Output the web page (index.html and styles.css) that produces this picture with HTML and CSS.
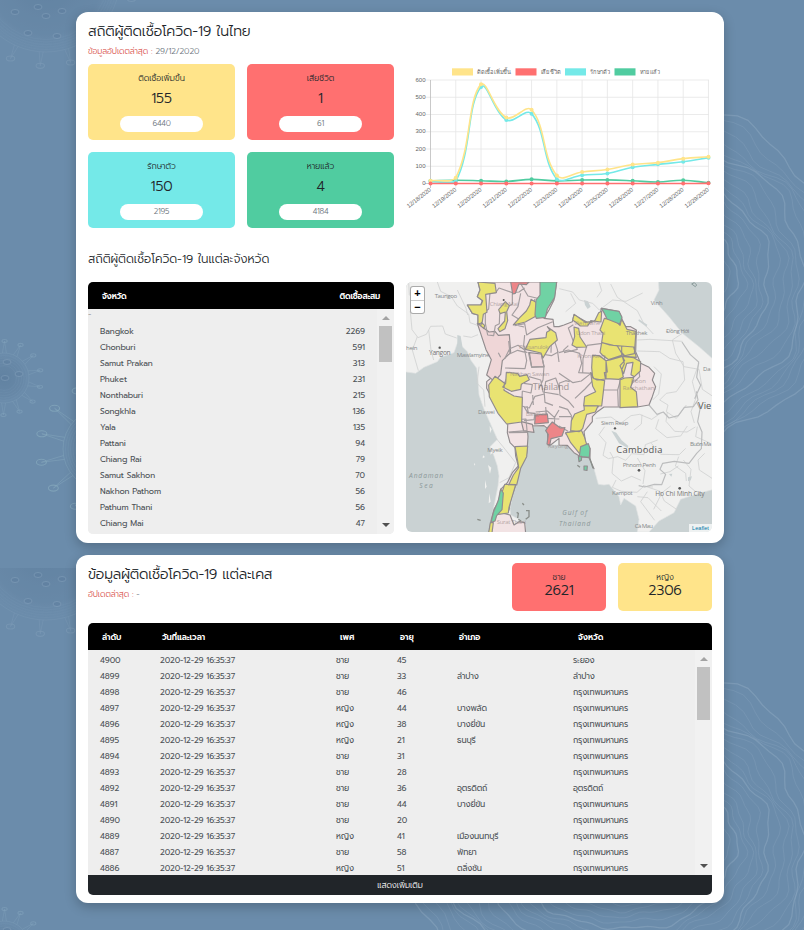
FILE: index.html
```html
<!DOCTYPE html>
<html lang="th">
<head>
<meta charset="utf-8">
<title>COVID-19</title>
<link rel="stylesheet" href="styles.css">
</head>
<body>
<svg class="backdrop" width="804" height="930" viewBox="0 0 804 930" aria-hidden="true">
  <defs>
    <radialGradient id="shade"><stop offset="0" stop-color="#3d5f80" stop-opacity=".38"/><stop offset=".75" stop-color="#526f8e" stop-opacity=".2"/><stop offset="1" stop-color="#6b8cab" stop-opacity="0"/></radialGradient>
    <clipPath id="tile-clip"><rect width="804" height="568"/></clipPath>
    <g id="tile" clip-path="url(#tile-clip)"></g>
  </defs>
  <use href="#tile"/>
  <use href="#tile" y="568"/>
</svg>
<main class="page">
  <section class="card card-summary">
    <div class="top">
      <div class="summary">
        <h1 class="title t1">สถิติผู้ติดเชื้อโควิด-19 ในไทย</h1>
        <p class="updated u1"><span class="red">ข้อมูลอัปเดตล่าสุด :</span> 29/12/2020</p>
        <div class="tiles">
          <div class="tile yellow"><span class="name">ติดเชื้อเพิ่มขึ้น</span><b>155</b><span class="pill">6440</span></div>
          <div class="tile red-bg"><span class="name">เสียชีวิต</span><b>1</b><span class="pill">61</span></div>
          <div class="tile cyan"><span class="name">รักษาตัว</span><b>150</b><span class="pill">2195</span></div>
          <div class="tile green"><span class="name">หายแล้ว</span><b>4</b><span class="pill">4184</span></div>
        </div>
      </div>
      <svg class="chart" id="chart" width="318" height="156" viewBox="400 60 318 156"></svg>
    </div>
    <h2 class="subtitle">สถิติผู้ติดเชื้อโควิด-19 ในแต่ละจังหวัด</h2>
    <div class="bottom">
      <div class="list">
        <div class="thead"><span class="h1a">จังหวัด</span><span class="h1b">ติดเชื้อสะสม</span></div>
        <div class="scroll">
          <div class="rows"><div class="dash">-</div><div id="provinces"></div></div>
          <div class="bar"><i class="up"></i><i class="thumb"></i><i class="down"></i></div>
        </div>
      </div>
      <div class="map">
        <svg width="306" height="250" viewBox="6 6 918 750">
          <rect width="930" height="760" fill="#cad2d3"/>
          <path class="land" d="M0 0H763L765 30 750 60 795 110 835 160 885 200 930 240V628L885 640 830 658 810 698 765 723 735 756H700L705 718 695 678 660 655 650 675 645 650 615 613 600 615 583 613 570 566 555 533 510 518 490 496 432 495 430 437 390 440 372 455 370 500 345 560 333 615 318 685 320 705 365 728V760H255L262 718 270 678 282 618 285 588 280 558 270 528 258 500 280 478 258 428 240 388 225 345 222 300 218 265 200 240 190 215 175 200 168 175 158 195 150 218 110 232 100 245 60 262 35 280 0 275Z"/>
          <path fill="#cad2d3" d="M540 60l12 4 8 16-9 7-8-12zM705 118l25 16-3 6-24-18zM622 452l15 6 16 23 20 17-2 6-26-14zM852 592l12-3-4 12-8 3zM795 582l10-1-3 9zM160 165l10 3 5 32-15 8z"/>
          <path fill="#f2f2f0" d="M257 438l6 10-5 12zM262 500l4 18-7 6zM252 555l10 8-4 18zM243 600l5 20-5 7zM256 640l4 25-6 5zM210 550l4 2-3 5zM237 526l6 5-7 4z"/>
          <g class="adm">
            <path d="M14 6l2 38 18 20-15 30 5 55 18 24 25-10 13-24 36-1 8 24 34 12M100 6l10 28 32 16 18 28 34 24 4 26 28 10M160 30l26 55 5 20M40 170l-15 40 18 62M74 150l7 60 8 30M178 168l24 4 20-8M225 260l-6 50 20 20 4 50M272 470l25 30 38 48-20 45-28 15"/>
            <path d="M466 26l40 10 20 24 40 10 20 20 40-30 40 4 50-25M620 12l20 40 60 40 20 40 28 30M700 180l38-2 97 6M700 213l67 2 30 20 40 10 5 55-25 35-30 5-20 20 25 15-5 20 30 20 30-40M835 160l-30 20 10 40 25 40 45 8 10 60 30 20M500 40l15 30-30 25M585 6l8 26-14 20M750 260l22 22-8 60-18 18M885 250l-20 55 12 46-16 44 10 34M790 396l-4 28 26 30 37 2 25-15M575 415l46-4 28 20 32-24 26-4 36 15 26-18M602 440l-17 24 21 24-9 38 16 10 28-6 24 11 18-20 37 3 4-30 37-14M618 516l10 18-4 46 28 23 31-14 28 12M636 600l-11 22 27 12 47 3 20-18 28 2M700 534l23 38-6 40M742 490l28 33 56 1 19-19M764 418l-9 28 34 27 41-5 20-30M824 530l-10 28 31 22 2 23M880 440l-5 30 43 19M717 616l51 18 13 29 41 28M700 650l32 3 40 40M730 635l-20 30 42 56M800 618l-26 20-25 50M838 540l23 28-6 50 21 18M690 450l22-18 2-28M769 582l29-7 25-17M902 520l-20 20 4 30 38 25"/>
          </g>
          <path class="border" d="M735 375l24 28 19-7 17 18 28-7 18-25 27-2 14-20-5-26M704 617l18 4 29-8 22 1 12-31-17-15 8-18 35-6 44 6 23-30 14-14 2-50-13-31 7-38-10-20M834 186l25 38 25 22-6 46 12 24-18 40"/>
          <path class="prov pale" d="M222 6L228 30 220 50 235 62 230 75 190 75 205 100 222 105 222 130 240 150 262 175 270 200 274 225 290 234 272 285 248 305 248 325 262 350 280 381 300 398 312 418 310 458 318 488 333 503 335 528 343 558 325 578 310 608 290 628 285 663 270 688 262 718 255 760H365L362 728 345 725 330 735 318 705 300 700 315 690 320 660 335 615 348 560 368 520 370 500 372 470 370 445 378 438 420 437 430 445 432 495 440 495 465 475 465 495 490 496 510 518 530 530 555 533 570 566 558 540 558 505 545 490 540 455 565 425 565 410 580 395 600 381 700 381 735 375 745 350 755 320 745 300 752 280 735 262 710 250 695 215 697 150 680 140 665 140 655 120 645 95 592 85 590 95 580 120 555 130 510 105 505 125 480 135 465 140 450 140 447 118 420 115 435 90 450 60 458 6Z"/>
          <path class="prov rose" d="M220 130l35 26 18-2 10 12 33-2 4 54-25 24-5 41-18 22-24-20 14-46-16-30zM376 218l36 4 8 38-37 1zM352 425l33 8 5 24-31-4z"/>
          <g class="lines">
            <path d="M275 38l10-14 40 14 0 35-17 8-21 22-1 28-12 6-5 30-18-2-7-35 0-35 10-8 4-50zM325 38l20-2 17-12M347 6l25 42 50 12 10-54M350 40l-8 40-18 25 20 12 0 20 16 4M393 57l-12 26M332 137l30-6 6 34 34-22 44-18M362 165l-3 30 5 22-23-6-23 10-4-38M290 232l-7-14M302 236l15-30 25-10 20 14 6 32-5 24-60-2M370 218l-10-5M412 222l30 5 22-12M412 222l8 38-37 2-10-46M420 258l-3 42-12 25M443 148l-2 70M440 148l20 60 5 38M318 275l-17 35M375 290l35 10 7 36 47 8M360 310l25 4-4 25-26-6M355 333l-2 45 23 6 17-35 28-7 2 25 24 9M386 345l2 30M420 342l5-37 30-11 11 30M360 380l11 18 22 2-3 19-30 3M373 398l-4-20M395 396l35-3 22 20-1 25M425 381l3 34 38 2M451 413l14-23M311 420l55-3 3 35-56 4M315 458l56-1"/>
            <path d="M508 134l-15 10 15 40 12 24-40 10M465 218l28-8 34 10 6 30-9 28 42 2M493 197l-16 15M465 280l42 28 25-5 29-23M549 196l46-6M549 196l-12 40-1 42M560 278l18 19 24-1 0-67M595 330l46 0 9-32M595 330l-12 52M641 330l2 50M465 310l20-8 12 3M465 310l3 36 26 18 16 19M513 355l30-28 28-30M465 380l26 8 12 20M465 410l38 0 3 42-23 10M465 438l27 16M690 300l-11 21 12 60M704 265l3 25-15 15"/>
          </g>
          <g class="prov yellow-f">
            <path d="M222 6L228 30 220 50 236 62 231 75 190 75 205 100 222 105 222 130 234 132 238 103 249 97 245 43 277 38 273 10zM232 127l10 9-2 10-10-9zM304 65l-20 24 4 12 16-5-2 27-20 23 5 9 16-9 8-24-3-27 8-18zM381 58l22 13-8 38-31 17-36 9 19-22 20-20 10-18zM430 140l8 11-10 6-2 16-48 5-14 30 47 11 6 15 20-34 23-20-5-22-13-9zM307 277l34 3 6 9 22-5 7 15-24 14-2 15-28 6-26-13 9-11zM273 289l28 20-1 22 30 17 25 4-2 74-45 6-26-32-26-50-2-35z"/>
            <path d="M510 103l34 24 28-4 12-25 9-4-2 32-31-4-9 16-22 0-14-12-9-5zM510 141l14 4 4 26 20 30-32 1-12-7 8-25zM601 115l30 4 17 17 5-18 16 30 27 6-5 67-33 7-18-30-23-3-24-8 4-27-9-10zM593 188l35 8 25 2 0 28-39 13-19-14-7-8zM653 198l36 3 8 31-33-3-11-12zM565 226l21 1 20 15 0 55-27 3-13-7-3-30zM606 242l12-2 37-11 6 22-8 18 5 22-13 7-41-2-3-18 9-2zM655 229l34 4 21 12-1 28-18 17-10-6 6-37-19 3-9 31-11-24 14-15zM560 278l10 18 32 6-9 76-54-1 3-27 33-15-9-16zM648 300l14-6 27-2-9 30 17 13 4 45-53 3z"/>
            <path d="M540 378h42l-8 18-26 7-12 43-10 9-26-3 2-30 10-20 29-12zM485 458l48-6 8 18 8 27-20 12 4 15-7-4-26-32zM333 500l38-2-3 32-18 35-12 50 0 0-24 0 14-30 16-22-3-20zM302 613l33 1-20 68-2 17-30 4-5-10 15-16-3-28zM259 728l9 0-4 30-10 0z"/>
          </g>
          <path class="prov green-f" d="M408 6h50l-6 46-22 35-6 25-27 3-4-10 3-45 12-15zM592 85l53 9 9 18-7 20-38-15-9-19zM530 500l23-9 5 15-2 26-30-3 2-15zM290 627l8 12-4 50-16 18-5 16-12 4 8-32 14-34zM523 530l10-1-1 12-7 4zM540 558l10 0-1 13-9-1z"/>
          <path class="prov red-f" d="M320 6h55l-8 8-22-2-11 28-8 2zM394 405l36-3 3 26-41 4zM433 440l12-14 24 18 14-1-9 25-33 8-4 20-8-4 4-28-8-12z"/>
          <path d="M338 697l5 3-2 14M366 692l9 0 0 18-10 8M343 718l9 5M220 718l10 3M355 670l5 5M558 536l9 29M520 556l8 6" stroke="#8a8e8a" stroke-width="4" fill="none"/>
          <g class="labels">
            <text x="92" y="55" textLength="67">Taungoo</text><text x="75" y="226" class="mid" textLength="65">Yangon</text><text x="6" y="209" textLength="34">hein</text><text x="158" y="231" textLength="98">Mawlamyine</text>
            <text x="257" y="78" class="dim" textLength="85">Chiang Mai</text><text x="345" y="207" class="dim" textLength="88">Phitsanulok</text><text x="318" y="287" class="dim" textLength="118">Nakhon Sawan</text><text x="386" y="331" class="country dim" textLength="110">Thailand</text>
            <text x="510" y="136" class="dim">Vientiane</text><text x="516" y="166" class="dim" textLength="88">Udon Thani</text><text x="520" y="234" class="dim" textLength="85">Khon Kaen</text><text x="665" y="166" textLength="65">Thakhek</text><text x="740" y="75" textLength="36">Vinh</text><text x="786" y="160" textLength="70">Đồng Hới</text><text x="897" y="273">Da</text><text x="680" y="309" class="dim">Ubon</text><text x="656" y="330" class="dim">Ratchathani</text>
            <text x="365" y="407" class="dim" textLength="66">Bangkok</text><text x="222" y="402" textLength="50">Dawei</text><text x="250" y="517" textLength="46">Myeik</text><text x="15" y="593" class="sea" textLength="102">Andaman</text><text x="46" y="625" class="sea" textLength="40">Sea</text><text x="278" y="733" class="dim" textLength="88">Surat Thani</text><text x="431" y="503" class="dim">Rayong</text>
            <text x="591" y="436" textLength="82">Siem Reap</text><text x="637" y="519" class="country" textLength="138">Cambodia</text><text x="656" y="562" textLength="100">Phnom Penh</text><text x="624" y="645" textLength="62">Kampot</text><text x="754" y="649" class="mid" textLength="148">Ho Chi Minh City</text><text x="692" y="743" textLength="55">Cà Mau</text><text x="858" y="499" textLength="64">Buôn Ma</text><text x="882" y="387" class="country" textLength="40">Vie</text><text x="475" y="705" class="sea" textLength="74">Gulf of</text><text x="465" y="738" class="sea" textLength="94">Thailand</text>
          </g>
          <g fill="#555"><circle cx="107" cy="203" r="3.5"/><circle cx="633" cy="445" r="3.5"/><circle cx="705" cy="571" r="4"/><circle cx="827" cy="625" r="4"/><circle cx="299" cy="60" r="3"/></g>
          <path d="M803 12l8-4 7 7-4 5z" transform="translate(60)" fill="none" stroke="#889999" stroke-width="3"/>
        </svg>
        <div class="zoom"><span>+</span><span>−</span></div>
        <div class="credit">Leaflet</div>
      </div>
    </div>
  </section>
  <section class="card card-cases">
    <header class="case-head">
      <div><h1 class="title t2">ข้อมูลผู้ติดเชื้อโควิด-19 แต่ละเคส</h1><p class="updated u2"><span class="red">อัปเดตล่าสุด :</span> -</p></div>
      <div class="sexes"><div class="sex red-bg"><span>ชาย</span><b>2621</b></div><div class="sex yellow"><span>หญิง</span><b>2306</b></div></div>
    </header>
    <div class="thead grid heads"><span>ลำดับ</span><span>วันที่และเวลา</span><span>เพศ</span><span>อายุ</span><span>อำเภอ</span><span>จังหวัด</span></div>
    <div class="scroll scroll-cases">
      <div class="rows" id="cases"></div>
      <div class="bar bar-cases"><i class="up"></i><i class="thumb"></i><i class="down"></i></div>
    </div>
    <div class="more">แสดงเพิ่มเติม</div>
  </section>
</main>
<script src="script.js"></script>
</body>
</html>
```
FILE: styles.css
```css
*{box-sizing:border-box}
body{margin:0;width:804px;height:930px;overflow:hidden;background:#6b8cab;color:#212529;font-family:Prompt,Kanit,"Noto Sans Thai","Open Sans","Noto Sans",sans-serif;font-weight:300;position:relative}
h1,h2,p{margin:0;font-weight:300}
.backdrop{position:absolute;left:0;top:0}
.page{position:relative;display:flex;flex-direction:column;gap:12px;padding:12px 80px 0 76px}
.card{background:#fff;border-radius:12px;padding:0 12px;box-shadow:0 4px 12px rgba(0,0,0,.22)}
.card-summary{height:531px}
.card-cases{height:348px}
.top{display:flex;gap:6px;height:216px}
.summary{width:306px}
.title{font-size:14.2px;letter-spacing:-.2px;line-height:22px;padding-top:9px;height:31px;white-space:nowrap}
.updated{font-size:8.2px;letter-spacing:-.13px;line-height:16px;height:21px;color:#6c757d;white-space:nowrap}
.red{color:#d9534f}
.tiles{display:grid;grid-template-columns:147px 147px;gap:12px}
.tile{height:76px;border-radius:5px;display:flex;flex-direction:column;align-items:center}
.yellow{background:#ffe48a}.red-bg{background:#ff7070}.cyan{background:#74e9e8}.green{background:#50cca0}
.name{font-size:8.3px;line-height:14px;margin-top:8px;height:14px;letter-spacing:-.05px}
.tile b{font-weight:300;font-size:14.2px;line-height:22px;height:30px;padding-top:2px;letter-spacing:-.2px}
.pill{width:83px;height:16px;border-radius:8px;background:#fff;color:#6c757d;text-align:center;font-size:7.8px;line-height:15px;letter-spacing:-.25px}
.chart{margin-top:48px;flex:none;font-family:"Liberation Sans",sans-serif;font-size:6px;fill:#666;font-weight:400}
.subtitle{font-size:11.9px;letter-spacing:-.04px;line-height:20px;height:54px;padding-top:21px;white-space:nowrap}
.bottom{display:flex;gap:12px}
.list{width:306px;height:252px;border-radius:5px;overflow:hidden;background:#eee}
.thead{background:#000;color:#fff;height:27px;line-height:29px;font-size:8.2px;letter-spacing:-.22px;font-weight:600;white-space:nowrap}
.list .thead{display:flex;justify-content:space-between;padding:0 14px}
.scroll{display:flex;height:225px;background:#eee;overflow:hidden;font-size:8.2px;letter-spacing:-.08px;font-weight:400;color:#4c5156}
.rows{flex:1;overflow:hidden}
.dash{height:14px;line-height:11px;font-size:8px;color:#999}
.prow{display:flex;justify-content:space-between;padding:0 12px;height:16px;line-height:17px}
.bar{width:17px;background:#f1f1f1;display:flex;flex-direction:column;align-items:center}
.up,.down{border:4px solid transparent;height:0;width:0}
.up{border-bottom:4px solid #a3a3a3;border-top:0;margin-top:7px}
.down{border-top:4px solid #505050;border-bottom:0;margin-top:auto;margin-bottom:7px}
.thumb{width:13px;height:36px;background:#c1c1c1;margin-top:6px}
.bar-cases .thumb{height:53px}
.map{width:306px;height:250px;border-radius:6px;overflow:hidden;position:relative}
.map svg{display:block}
.zoom{position:absolute;left:5px;top:5px;width:13px;height:26px;background:#fff;border-radius:2px;box-shadow:0 0 0 1px #aaa;display:flex;flex-direction:column;font:bold 11px/13px "Liberation Sans",sans-serif;text-align:center;color:#000}
.zoom span{height:13px}
.zoom span+span{border-top:1px solid #ccc;line-height:12px}
.credit{position:absolute;right:0;bottom:0;width:23px;height:8px;background:rgba(255,255,255,.7);color:#0078a8;font:5.6px/8px "Liberation Sans",sans-serif;text-align:center}
.land{fill:#f0f0ef;stroke:#dfe2e2;stroke-width:2}
.adm path{fill:none;stroke:#d0d1d1;stroke-width:2.5;stroke-linejoin:round}
.border{fill:none;stroke:#bcbdbe;stroke-width:3.5;stroke-linejoin:round}
.prov{stroke:#918c8e;stroke-width:3.5;stroke-linejoin:round}
.pale{fill:#f2e3e4}.rose{fill:#efd6d7}.yellow-f{fill:#e9e372}.green-f{fill:#70d2a4}.red-f{fill:#ed8588}
.lines path{fill:none;stroke:#a39d9f;stroke-width:3.5;stroke-linejoin:round}
.labels{font-family:"Open Sans","Noto Sans",sans-serif;font-size:18px;font-weight:400;fill:#85888a}
.labels .mid{font-size:20px;fill:#777}
.labels .dim{fill:#8d8081;opacity:.6}
.labels .country{font-size:28px;fill:#555}
.labels .country.dim{fill:#6b6364}
.labels .sea{font-size:20px;font-style:italic;fill:#8b9899}
.case-head{display:flex;justify-content:space-between;height:68px}
.sexes{display:flex;gap:12px;padding-top:8px}
.sex{width:94px;height:48px;border-radius:5px;text-align:center;display:flex;flex-direction:column;padding-top:8px}
.sex span{font-size:8px;line-height:12px;height:12px}
.sex b{font-size:14.2px;font-weight:300;line-height:16px;letter-spacing:-.2px}
.grid{display:grid;grid-template-columns:60px 176px 61px 60px 116px 1fr;padding-left:12px;white-space:nowrap}
.heads{border-radius:5px 5px 0 0;padding-left:14px;grid-template-columns:60px 178px 60px 59px 119px 1fr;letter-spacing:-.05px}
.scroll-cases{letter-spacing:-.13px}
.scroll-cases #cases{padding-top:2px}
.crow{height:16px;line-height:17px}
.t2{letter-spacing:-.23px}
.more{height:20px;background:#212529;color:#fff;border-radius:0 0 5px 5px;font-size:8.2px;letter-spacing:-.1px;line-height:21px;text-align:center}
```
FILE: script.js
```js
const provinces = [["Bangkok",2269],["Chonburi",591],["Samut Prakan",313],["Phuket",231],["Nonthaburi",215],["Songkhla",136],["Yala",135],["Pattani",94],["Chiang Rai",79],["Samut Sakhon",70],["Nakhon Pathom",56],["Pathum Thani",56],["Chiang Mai",47]];
document.getElementById("provinces").innerHTML = provinces.map(([n, c]) => `<div class="prow"><span>${n}</span><span>${c}</span></div>`).join("");

const M = "ชาย", F = "หญิง", BKK = "กรุงเทพมหานคร";
const cases = [[4900,M,45,"","ระยอง"],[4899,M,33,"ลำปาง","ลำปาง"],[4898,M,46,"",BKK],[4897,F,44,"บางพลัด",BKK],[4896,F,38,"บางยี่ขัน",BKK],[4895,F,21,"ธนบุรี",BKK],[4894,M,31,"",BKK],[4893,M,28,"",BKK],[4892,M,36,"อุตรดิตถ์","อุตรดิตถ์"],[4891,M,44,"บางยี่ขัน",BKK],[4890,M,20,"",BKK],[4889,F,41,"เมืองนนทบุรี",BKK],[4887,M,58,"พัทยา",BKK],[4886,F,51,"ตลิ่งชัน",BKK]];
document.getElementById("cases").innerHTML = cases.map(([id, s, a, d, p]) => `<div class="grid crow"><span>${id}</span><span>2020-12-29 16:35:37</span><span>${s}</span><span>${a}</span><span>${d}</span><span>${p}</span></div>`).join("");

// Line chart
const X0 = 430.5, DX = 25.27, Y0 = 183.5, K = 103.5 / 600;
const series = [
  ["#50cca0", [16,19,16,12,24,15,20,21,16,9,19,4]],
  ["#74e9e8", [10,12,560,368,405,25,48,58,94,111,126,150]],
  ["#ffe48a", [16,34,576,382,427,46,67,81,110,121,144,155]],
  ["#ff7070", [0,0,0,0,0,0,0,0,0,0,0,1]]
];
let out = "";
for (let i = 0; i <= 6; i++) {
  const y = Y0 - i * 17.25;
  out += `<path d="M425 ${y}H709" stroke="${i ? "#e6e6e6" : "#bbb"}" stroke-width=".8"/><text x="425.5" y="${y + 1.5}" text-anchor="end">${i * 100}</text>`;
}
for (let i = 0; i < 12; i++) {
  const x = X0 + i * DX;
  out += `<path d="M${x} 80V188" stroke="${i ? "#e6e6e6" : "#bbb"}" stroke-width=".8"/><text transform="translate(${x + 1} 190.5) rotate(-38)" text-anchor="end" textLength="29">12/${18 + i}/2020</text>`;
}
const clamp = y => Math.max(80, Math.min(Y0, y));
for (const [color, data] of series) {
  const p = data.map((v, i) => [X0 + i * DX, Y0 - v * K]);
  const ctl = p.map((c, i) => {
    const a = p[i - 1] || c, b = p[i + 1] || c;
    const d1 = Math.hypot(c[0] - a[0], c[1] - a[1]), d2 = Math.hypot(b[0] - c[0], b[1] - c[1]);
    const s1 = 0.4 * d1 / (d1 + d2), s2 = 0.4 * d2 / (d1 + d2);
    return [c[0] - s1 * (b[0] - a[0]), clamp(c[1] - s1 * (b[1] - a[1])), c[0] + s2 * (b[0] - a[0]), clamp(c[1] + s2 * (b[1] - a[1]))];
  });
  let d = "M" + p[0];
  for (let i = 1; i < 12; i++) d += `C${ctl[i - 1][2]} ${ctl[i - 1][3]} ${ctl[i][0]} ${ctl[i][1]} ${p[i][0]} ${p[i][1]}`;
  out += `<path d="${d}" fill="none" stroke="${color}" stroke-width="1.6"/>` + p.map(q => `<circle cx="${q[0]}" cy="${q[1]}" r="2" fill="${color}"/>`).join("");
}
[["#ffe48a",452,477,34,"ติดเชื้อเพิ่มขึ้น"],["#ff7070",515.5,540.5,20,"เสียชีวิต"],["#74e9e8",565,590,20,"รักษาตัว"],["#50cca0",614.5,639.5,20,"หายแล้ว"]].forEach(([c, x, t, w, s]) => {
  out += `<rect x="${x}" y="68.3" width="21" height="7.2" fill="${c}"/><text x="${t}" y="73.7" textLength="${w}" lengthAdjust="spacingAndGlyphs">${s}</text>`;
});
document.getElementById("chart").innerHTML = out;

// Backdrop: virus spheres on the left, contour waves on the right
let art = "";
const virus = (cx, cy, r, spikes, len, knob, color, strength, fill) => {
  art += `<g opacity="${strength}"><circle cx="${cx}" cy="${cy}" r="${r}" fill="${fill}" stroke="${color}" stroke-opacity=".35"/>`;
  for (let k = 1; k < 6; k++) art += `<circle cx="${cx}" cy="${cy}" r="${r - k * 2.5}" fill="none" stroke="${color}" stroke-width=".5" opacity=".3"/>`;
  for (let i = 0; i < spikes; i++) {
    const t = i * 2 * Math.PI / spikes + 0.24, c = Math.cos(t), s = Math.sin(t);
    art += `<path d="M${cx + c * r - s * 2} ${cy + s * r + c * 2}L${cx + c * (r + len)} ${cy + s * (r + len)}L${cx + c * r + s * 2} ${cy + s * r - c * 2}" fill="none" stroke="${color}" stroke-width=".8" opacity=".5"/><ellipse cx="${cx + c * (r + len)}" cy="${cy + s * (r + len)}" rx="${knob}" ry="${knob * .6}" fill="none" stroke="${color}" stroke-width="1.1" opacity=".6"/>`;
  }
  art += "</g>";
};
virus(46, -22, 74, 18, 14, 4.2, "#8aa6c0", .6, "url(#shade)");
virus(4, 378, 25, 14, 12, 2.6, "#8fb0c6", .6, "url(#shade)");
virus(104, 449, 41, 14, 23, 5, "#96bac8", .75, "none");
[[46,16],[62,11],[38,7],[15,12],[28,33],[57,36],[5,378],[7,362],[19,374]].forEach(([x, y]) => art += `<ellipse cx="${x}" cy="${y}" rx="4" ry="2.5" fill="#5d7d9e" stroke="#8aa6c0" opacity=".45"/>`);
for (let k = 0; k < 24; k++) {
  const rx = 215 - k * 7, ry = 180 - k * 6.5;
  let d = "";
  for (let i = 0; i <= 120; i++) {
    const t = i / 120 * 2 * Math.PI, w = 1 + .022 * Math.sin(t * 11 + k * .5) + .012 * Math.sin(t * 23 - k * .9) + .02 * Math.sin(t * 5 + k);
    d += (i ? "L" : "M") + (625 + rx * w * Math.cos(t)).toFixed(1) + " " + (279 + ry * w * Math.sin(t)).toFixed(1);
  }
  art += `<path d="${d}" fill="none" stroke="#9ab4cb" stroke-width="${k % 5 ? .6 : 1.3}" opacity=".36"/>`;
}
document.getElementById("tile").innerHTML = art;
```
